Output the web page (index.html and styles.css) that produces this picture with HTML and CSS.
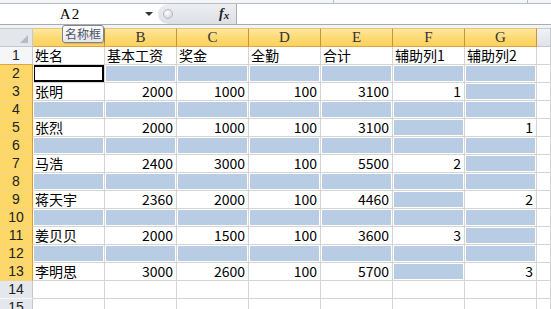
FILE: index.html
```html
<!DOCTYPE html>
<html>
<head>
<meta charset="utf-8">
<link rel="stylesheet" href="styles.css">
</head>
<body>
<div class="app">
  <div class="topstrip"><span class="div1"></span><span class="div2"></span></div>
  <div class="fbar">
    <div class="namebox"><span class="nameval">A2</span><span class="arrow"></span></div>
    <div class="fxbox"><span class="knob"></span><span class="fx">f<sub>x</sub></span></div>
    <div class="input"></div>
  </div>
  <div class="gap"></div>
  <div class="sheet">
    <div class="corner"><span class="tri"></span></div>
    <div class="ch"></div><div class="ch">B</div><div class="ch">C</div><div class="ch">D</div><div class="ch">E</div><div class="ch">F</div><div class="ch">G</div><div class="ch off"></div>

    <div class="rh first">1</div>
    <div class="c">姓名</div><div class="c">基本工资</div><div class="c">奖金</div><div class="c">全勤</div><div class="c">合计</div><div class="c">辅助列1</div><div class="c">辅助列2</div><div class="c"></div>

    <div class="rh">2</div>
    <div class="c active"></div><div class="c b"></div><div class="c b"></div><div class="c b"></div><div class="c b"></div><div class="c b"></div><div class="c b"></div><div class="c"></div>

    <div class="rh">3</div>
    <div class="c">张明</div><div class="c n">2000</div><div class="c n">1000</div><div class="c n">100</div><div class="c n">3100</div><div class="c n">1</div><div class="c b"></div><div class="c"></div>

    <div class="rh">4</div>
    <div class="c b"></div><div class="c b"></div><div class="c b"></div><div class="c b"></div><div class="c b"></div><div class="c b"></div><div class="c b"></div><div class="c"></div>

    <div class="rh">5</div>
    <div class="c">张烈</div><div class="c n">2000</div><div class="c n">1000</div><div class="c n">100</div><div class="c n">3100</div><div class="c b"></div><div class="c n">1</div><div class="c"></div>

    <div class="rh">6</div>
    <div class="c b"></div><div class="c b"></div><div class="c b"></div><div class="c b"></div><div class="c b"></div><div class="c b"></div><div class="c b"></div><div class="c"></div>

    <div class="rh">7</div>
    <div class="c">马浩</div><div class="c n">2400</div><div class="c n">3000</div><div class="c n">100</div><div class="c n">5500</div><div class="c n">2</div><div class="c b"></div><div class="c"></div>

    <div class="rh">8</div>
    <div class="c b"></div><div class="c b"></div><div class="c b"></div><div class="c b"></div><div class="c b"></div><div class="c b"></div><div class="c b"></div><div class="c"></div>

    <div class="rh">9</div>
    <div class="c">蒋天宇</div><div class="c n">2360</div><div class="c n">2000</div><div class="c n">100</div><div class="c n">4460</div><div class="c b"></div><div class="c n">2</div><div class="c"></div>

    <div class="rh">10</div>
    <div class="c b"></div><div class="c b"></div><div class="c b"></div><div class="c b"></div><div class="c b"></div><div class="c b"></div><div class="c b"></div><div class="c"></div>

    <div class="rh">11</div>
    <div class="c">姜贝贝</div><div class="c n">2000</div><div class="c n">1500</div><div class="c n">100</div><div class="c n">3600</div><div class="c n">3</div><div class="c b"></div><div class="c"></div>

    <div class="rh">12</div>
    <div class="c b"></div><div class="c b"></div><div class="c b"></div><div class="c b"></div><div class="c b"></div><div class="c b"></div><div class="c b"></div><div class="c"></div>

    <div class="rh">13</div>
    <div class="c">李明思</div><div class="c n">3000</div><div class="c n">2600</div><div class="c n">100</div><div class="c n">5700</div><div class="c b"></div><div class="c n">3</div><div class="c"></div>

    <div class="rh off">14</div>
    <div class="c"></div><div class="c"></div><div class="c"></div><div class="c"></div><div class="c"></div><div class="c"></div><div class="c"></div><div class="c"></div>

    <div class="rh off">15</div>
    <div class="c"></div><div class="c"></div><div class="c"></div><div class="c"></div><div class="c"></div><div class="c"></div><div class="c"></div><div class="c"></div>
  </div>
  <div class="tooltip">名称框</div>
</div>
</body>
</html>
```
FILE: styles.css
```css
html, body {
  margin: 0;
  padding: 0;
  background: #ffffff;
  overflow: hidden;
}
.app {
  position: relative;
  width: 551px;
  height: 309px;
  overflow: hidden;
  font-family: "Noto Sans CJK SC", sans-serif;
}
.topstrip {
  position: relative;
  height: 3px;
  background: #f4f5f7;
  border-bottom: 1px solid #b9bcc1;
}
.topstrip .div1, .topstrip .div2 {
  position: absolute;
  top: 0;
  width: 1px;
  height: 3px;
  background: #b9bcc1;
}
.topstrip .div1 { left: 333px; }
.topstrip .div2 { left: 527px; }
.fbar {
  display: flex;
  height: 20px;
  border-bottom: 1px solid #a8abb0;
  background: #ffffff;
}
.namebox {
  position: relative;
  width: 158px;
  display: flex;
  align-items: center;
}
.nameval {
  width: 140px;
  text-align: center;
  font-family: "Liberation Serif", serif;
  font-size: 15px;
  color: #000;
  line-height: 20px;
  letter-spacing: 1px;
}
.arrow {
  width: 0;
  height: 0;
  margin-left: 5px;
  border-left: 4px solid transparent;
  border-right: 4px solid transparent;
  border-top: 4px solid #333;
}
.fxbox {
  position: relative;
  width: 78px;
  background: linear-gradient(#eceef1, #dcdfe4);
  border-radius: 10px 0 0 10px;
  border-right: 1px solid #a8abb0;
  display: flex;
  align-items: center;
}
.knob {
  width: 10px;
  height: 10px;
  margin-left: 5px;
  border-radius: 50%;
  background: radial-gradient(circle at 40% 35%, #ffffff, #c9ccd2);
  border: 1px solid #b4b8bf;
  box-sizing: border-box;
}
.fx {
  margin-left: 46px;
  font-family: "Liberation Serif", serif;
  font-style: italic;
  font-weight: bold;
  font-size: 14px;
  color: #222;
  line-height: 20px;
}
.fx sub {
  font-size: 11px;
  vertical-align: -1px;
}
.input {
  flex: 1;
  background: #fff;
}
.gap {
  height: 3px;
  background: #f2f3f5;
}
.sheet {
  display: grid;
  grid-template-columns: 33px repeat(7, 72px) 1fr;
  grid-template-rows: 19px repeat(15, 18px);
}
.sheet > div {
  box-sizing: border-box;
}
.corner {
  position: relative;
  background: #e3e6ea;
  border-right: 1px solid #c5c9cf;
  border-bottom: 1px solid #c5c9cf;
  border-top: 1px solid #c5c9cf;
}
.tri {
  position: absolute;
  right: 4px;
  bottom: 3px;
  width: 0;
  height: 0;
  border-left: 8px solid transparent;
  border-bottom: 8px solid #b7bcc4;
}
.ch {
  background: linear-gradient(#fde7a4 0%, #fddb77 45%, #fbd25e 100%);
  border-right: 1px solid #c9923c;
  border-bottom: 1px solid #e0a540;
  border-top: 1px solid #e9c36e;
  text-align: center;
  font-family: "Liberation Serif", serif;
  font-size: 15px;
  line-height: 17px;
  color: #333;
}
.ch.off {
  background: linear-gradient(#f0f2f5, #dfe3e8);
  border-right: 1px solid #c5c9cf;
  border-bottom: 1px solid #c5c9cf;
  border-top: 1px solid #c5c9cf;
}
.rh {
  background: #fdd868;
  border-right: 1px solid #d99a34;
  border-bottom: 1px solid #efd48a;
  text-align: center;
  font-family: "Liberation Sans", sans-serif;
  font-size: 14px;
  line-height: 17px;
  color: #222;
}
.rh.off {
  background: #e4e7eb;
  border-right: 1px solid #c5c9cf;
  border-bottom: 1px solid #f7f8fa;
}
.rh.first {
  background: #f5f6f8;
  border-right: 1px solid #c5c9cf;
  border-bottom: 1px solid #e0a540;
}
.c {
  border-right: 1px solid #d4d4d4;
  border-bottom: 1px solid #d4d4d4;
  font-size: 14px;
  line-height: 17px;
  color: #000;
  padding: 0 2px;
  white-space: nowrap;
}
.c.n {
  text-align: right;
  padding-right: 3px;
}
.c.b {
  background: #b8cce4;
  box-shadow: inset 0 0 0 1px #ffffff;
}
.c.active {
  box-shadow: inset 1px 0 0 0 #000, inset -2px 0 0 0 #000, inset 0 2px 0 0 #000, inset 0 -2px 0 0 #000;
  margin-left: 1px;
}
.tooltip {
  position: absolute;
  left: 62px;
  top: 25px;
  width: 42px;
  height: 18px;
  box-sizing: border-box;
  border: 1px solid #7f8590;
  border-radius: 3px;
  background: linear-gradient(#ffffff, #e4e5ee);
  font-size: 12px;
  line-height: 16px;
  text-align: center;
  color: #4a5363;
  box-shadow: 1px 1px 1px rgba(0,0,0,0.15);
}
```
